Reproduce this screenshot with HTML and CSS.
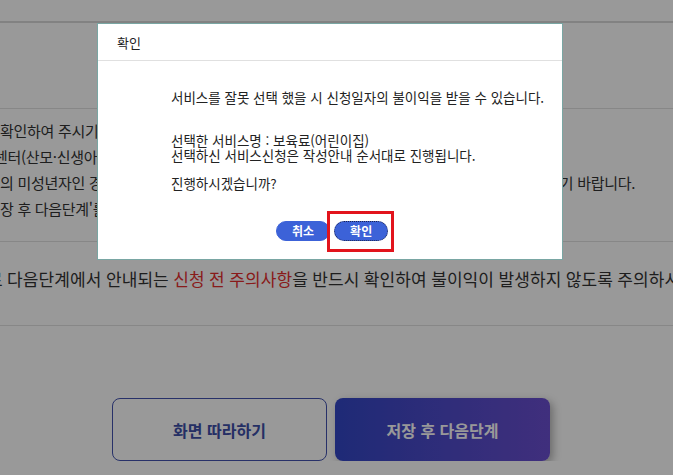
FILE: index.html
```html
<!DOCTYPE html>
<html lang="ko">
<head>
    <meta charset="UTF-8">
    <meta name="viewport" content="width=device-width, initial-scale=1.0">
    <title>서비스 신청</title>
    <link rel="stylesheet" href="styles.css">
</head>
<body>
    <div class="page">
        <div class="page-head"></div>
        <div class="page-intro"></div>

        <div class="notice">
            <p class="notice-line">확인하여 주시기 바랍니다.</p>
            <p class="notice-line cut">센터(산모·신생아 건강관리) 신청은 별도로 진행됩니다.</p>
            <p class="notice-line">의 미성년자인 경우 법정 대리인이 신청하여야 하므로, 자세한 내용은 사업 안내문을 참고하시기 바랍니다.</p>
            <p class="notice-line">장 후 다음단계'를 눌러 주십시오.</p>
        </div>

        <div class="caution">
            <p class="caution-line">로 다음단계에서 안내되는 <span class="warn">신청 전 주의사항</span>을 반드시 확인하여 불이익이 발생하지 않도록 주의하시기 바랍니다.</p>
        </div>

        <div class="actions">
            <button class="btn-outline">화면 따라하기</button>
            <button class="btn-primary">저장 후 다음단계</button>
        </div>
    </div>

    <div class="dim"></div>

    <div class="dialog">
        <div class="dialog-title">확인</div>
        <div class="dialog-body">
            <p class="msg">서비스를 잘못 선택 했을 시 신청일자의 불이익을 받을 수 있습니다.</p>
            <p class="msg gap-lg">선택한 서비스명 : 보육료(어린이집)<br>선택하신 서비스신청은 작성안내 순서대로 진행됩니다.</p>
            <p class="msg gap-sm">진행하시겠습니까?</p>

            <div class="dialog-buttons">
                <button class="pill">취소</button>
                <span class="mark">
                    <button class="pill focused">확인</button>
                </span>
            </div>
        </div>
    </div>
</body>
</html>
```

FILE: styles.css
```css
body {
    margin: 0;
    font-family: "Noto Sans CJK KR", "Noto Sans", sans-serif;
    color: #333;
    background-color: #fff;
    overflow: hidden;
    height: 475px;
}

p {
    margin: 0;
}

.page {
    width: 673px;
    overflow: hidden;
}

.page-head {
    height: 21px;
    border-bottom: 2px solid #d9d9d9;
}

.page-intro {
    height: 85px;
    border-bottom: 1px solid #e2e2e2;
}

.notice {
    padding: 9px 0 19px;
    border-bottom: 1px solid #e2e2e2;
}

.notice-line {
    font-size: 15px;
    line-height: 26px;
    white-space: nowrap;
    letter-spacing: -0.3px;
}

.notice-line.cut {
    margin-left: -6px;
}

.caution {
    padding: 24px 0 33px;
    border-bottom: 1px solid #e2e2e2;
}

.caution-line {
    font-size: 17px;
    line-height: 26px;
    white-space: nowrap;
    margin-left: -13px;
    letter-spacing: 0.1px;
    word-spacing: -0.5px;
}

.warn {
    color: #e52e2e;
}

.actions {
    display: flex;
    gap: 8px;
    padding: 72px 0 0 112px;
}

.actions button {
    width: 215px;
    height: 63px;
    font-family: inherit;
    font-size: 16px;
    font-weight: 700;
    border-radius: 8px;
}

.btn-outline {
    background-color: #fff;
    color: #3e4fa8;
    border: 1px solid #4353b0;
}

.btn-primary {
    color: #fff;
    border: none;
    background: linear-gradient(90deg, #3347c6, #6b4fd0);
    box-shadow: 3px 3px 8px rgba(0, 0, 0, 0.3);
}

.dim {
    position: fixed;
    inset: 0;
    background-color: rgba(0, 0, 0, 0.4);
}

.dialog {
    position: fixed;
    top: 23px;
    left: 97px;
    width: 464px;
    height: 235px;
    background-color: #fff;
    border: 1px solid #79a6a3;
    color: #222;
}

.dialog-title {
    height: 36px;
    line-height: 38px;
    padding-left: 19px;
    font-size: 13px;
    border-bottom: 1px solid #e0e0e0;
}

.dialog-body {
    padding: 29px 0 0 73px;
}

.msg {
    font-size: 13.5px;
    line-height: 15px;
}

.gap-lg {
    margin-top: 28px;
}

.gap-sm {
    margin-top: 13px;
}

.dialog-buttons {
    display: flex;
    align-items: center;
    gap: 4px;
    margin: 30px 0 0 105px;
}

.pill {
    height: 20px;
    padding: 0 15px;
    font-family: inherit;
    font-size: 12px;
    font-weight: 700;
    line-height: 18px;
    color: #fff;
    background-color: #3c62d8;
    border: 1px solid #3c62d8;
    border-radius: 10px;
}

.pill.focused {
    padding: 0 15px;
    border: 1px dotted #1c2450;
}

.mark {
    position: relative;
    display: flex;
}

.mark::after {
    content: "";
    position: absolute;
    top: -10px;
    bottom: -11px;
    left: -7px;
    right: -6px;
    border: 3px solid #e2141c;
}
```
